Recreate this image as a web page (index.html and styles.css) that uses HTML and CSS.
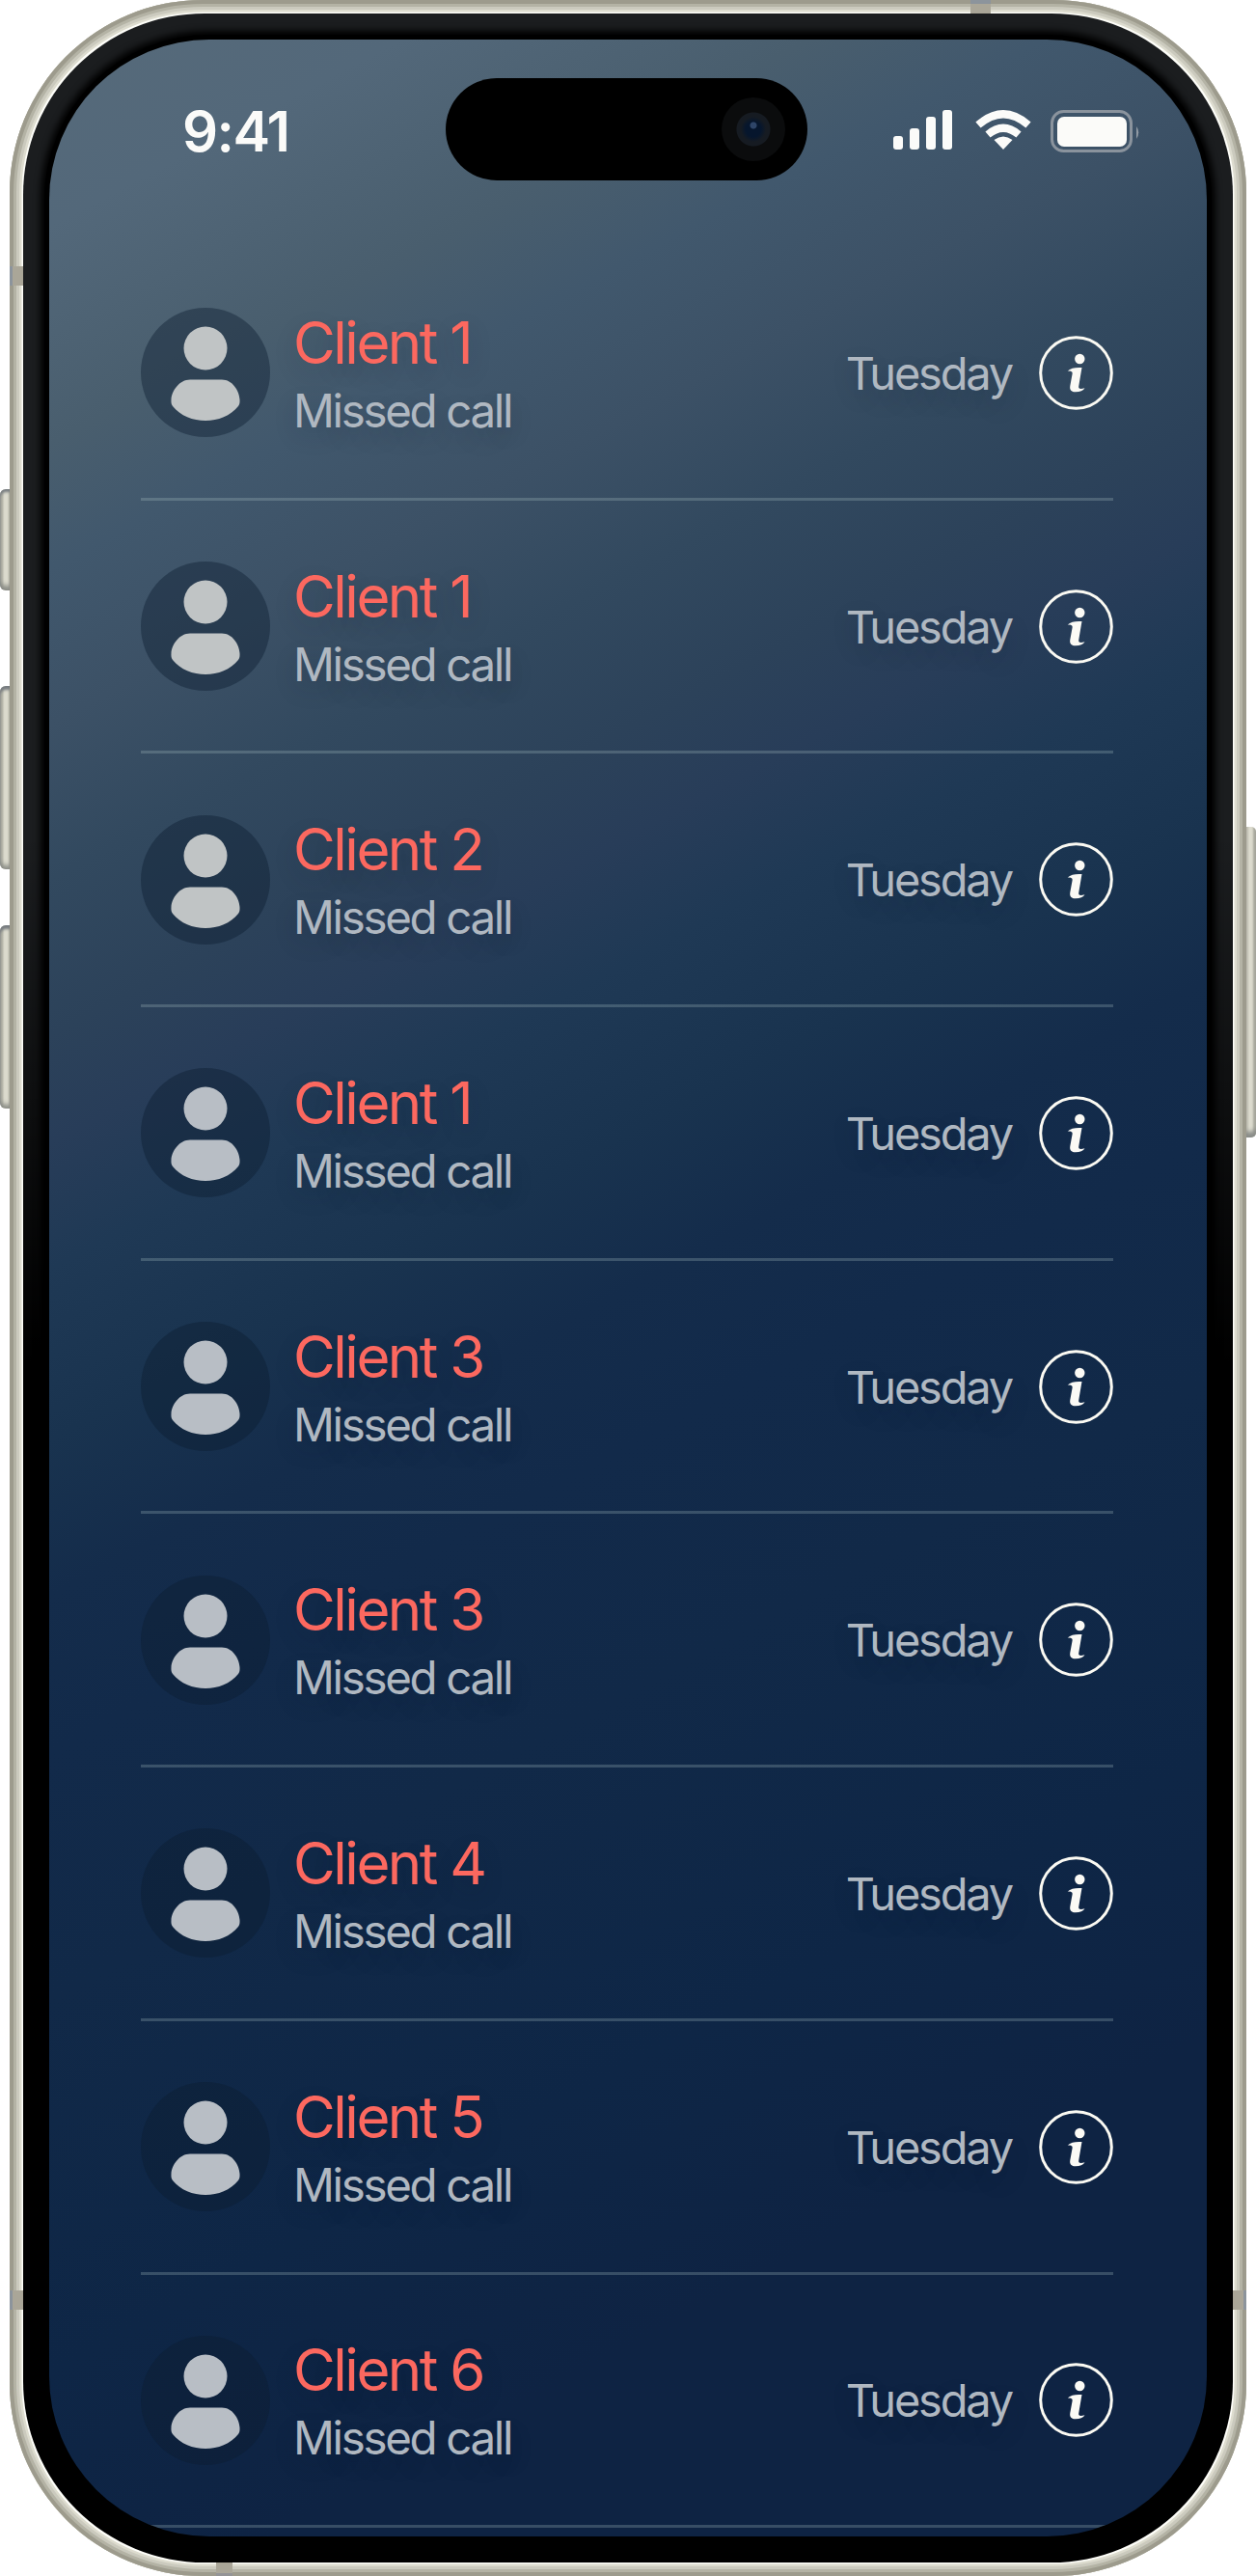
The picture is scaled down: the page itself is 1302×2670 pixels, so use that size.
FILE: index.html
```html
<!DOCTYPE html>
<html lang="en">
<head>
<meta charset="utf-8">
<title>Recent calls</title>
<link rel="stylesheet" href="styles.css">
</head>
<body>
<svg class="defs" aria-hidden="true">
  <symbol id="person" viewBox="0 0 134 134">
    <circle cx="67" cy="42" r="22.5"/>
    <path d="M51 74.500H84C95 74.500 102 86 102.500 95C102.700 98 102.500 100 101 102C93 112 80 117 67 117C54 117 41 112 33 102C31.500 100 31.300 98 31.500 95C32 86 40 74.500 51 74.500Z"/>
  </symbol>
  <symbol id="info" viewBox="0 0 77 77">
    <circle cx="38.500" cy="38.500" r="36.800" fill="none" stroke="#fbfaf3" stroke-width="3"/>
    <circle cx="42.300" cy="24" r="5.200"/>
    <path d="M29.700 36.500C33 33.500 38 32.500 44.500 33L41.200 52.500C40.800 54.800 42.500 55.800 47.500 54.200C46 57 42.500 58.300 38 58.300C33.500 58.300 31.600 56 32.300 52L34.600 39.500C35 37.200 33.500 36.500 29.700 36.500Z"/>
  </symbol>
</svg>
<div class="phone">
  <i class="side action"></i><i class="side vol-up"></i><i class="side vol-down"></i><i class="side power"></i>
  <div class="frame">
    <i class="band band-left-top"></i><i class="band band-left-bottom"></i><i class="band band-right"></i><i class="band band-top"></i><i class="band band-bottom"></i>
    <div class="bezel">
      <main class="screen">
        <header class="status">
          <span class="time">9:41</span>
          <svg class="indicators" width="260" height="46" viewBox="0 0 260 46">
            <g fill="#fbfbf9">
              <rect x="5" y="28" width="10" height="14" rx="3"/>
              <rect x="22" y="20" width="10" height="22" rx="3"/>
              <rect x="39" y="8" width="10" height="34" rx="3"/>
              <rect x="56" y="1" width="10" height="41" rx="3"/>
              <path d="M119 42L109.500 32Q119 25 128.500 32Z"/>
            </g>
            <g fill="none" stroke="#fbfbf9" stroke-width="8">
              <path d="M93 16.500Q119 -6 145 16.500"/>
              <path d="M103 26.500Q119 13 135 26.500"/>
            </g>
            <rect x="169.500" y="2.500" width="82" height="41" rx="12" fill="none" stroke="#8a939d" stroke-width="3"/>
            <rect x="175" y="8" width="72" height="31" rx="7" fill="#fbfbf9"/>
            <path d="M257 18Q261.500 24 257 31Z" fill="#919aa4"/>
          </svg>
        </header>
        <ul class="calls">
          <li class="call"><svg class="avatar"><use href="#person"/></svg><div class="who"><b>Client 1</b><span>Missed call</span></div><time>Tuesday</time><svg class="info"><use href="#info"/></svg></li>
          <li class="call"><svg class="avatar"><use href="#person"/></svg><div class="who"><b>Client 1</b><span>Missed call</span></div><time>Tuesday</time><svg class="info"><use href="#info"/></svg></li>
          <li class="call"><svg class="avatar"><use href="#person"/></svg><div class="who"><b>Client 2</b><span>Missed call</span></div><time>Tuesday</time><svg class="info"><use href="#info"/></svg></li>
          <li class="call"><svg class="avatar"><use href="#person"/></svg><div class="who"><b>Client 1</b><span>Missed call</span></div><time>Tuesday</time><svg class="info"><use href="#info"/></svg></li>
          <li class="call"><svg class="avatar"><use href="#person"/></svg><div class="who"><b>Client 3</b><span>Missed call</span></div><time>Tuesday</time><svg class="info"><use href="#info"/></svg></li>
          <li class="call"><svg class="avatar"><use href="#person"/></svg><div class="who"><b>Client 3</b><span>Missed call</span></div><time>Tuesday</time><svg class="info"><use href="#info"/></svg></li>
          <li class="call"><svg class="avatar"><use href="#person"/></svg><div class="who"><b>Client 4</b><span>Missed call</span></div><time>Tuesday</time><svg class="info"><use href="#info"/></svg></li>
          <li class="call"><svg class="avatar"><use href="#person"/></svg><div class="who"><b>Client 5</b><span>Missed call</span></div><time>Tuesday</time><svg class="info"><use href="#info"/></svg></li>
          <li class="call"><svg class="avatar"><use href="#person"/></svg><div class="who"><b>Client 6</b><span>Missed call</span></div><time>Tuesday</time><svg class="info"><use href="#info"/></svg></li>
        </ul>
        <div class="island"><i class="camera"></i></div>
      </main>
    </div>
  </div>
</div>
</body>
</html>
```
FILE: styles.css
```css
* { box-sizing: border-box; }
body { margin: 0; background: #fff; font-family: Inter, "Liberation Sans", sans-serif; }
.defs { position: absolute; width: 0; height: 0; }

/* Device body */
.phone { position: relative; width: 1302px; height: 2670px; padding: 0 10px; overflow: hidden; }
.frame {
  position: relative; height: 2670px; padding: 14px; border-radius: 200px; background: #fdfdf8;
  box-shadow: inset 0 0 0 4px #9d9b8d, inset 0 0 0 7px #b4b3a5, inset 0 0 0 10px #cbcabe, inset 0 0 0 12.5px #dddccf;
}
.bezel {
  height: 2642px; padding: 27px; border-radius: 188px;
  background: linear-gradient(transparent 850px, #000 1400px), #1b1d1f;
  position: relative;
}
.bezel::before {
  content: ""; position: absolute; inset: 22px; border-radius: 171px; background: #000;
  box-shadow: 0 0 7px 4px #000;
}
.screen {
  position: relative; height: 2588px; border-radius: 166px; overflow: hidden;
  background: linear-gradient(152deg, #566a7a 0%, #53687a 6%, #495e6e 13%, #41586d 17%, #3c5166 22%, #32495f 27%, #2c425a 32%, #283d59 35.500%, #1f3955 39.500%, #19334f 45%, #142c4b 50%, #122a4a 55%, #112948 63%, #0e2646 75%, #0e2343 84%, #0e2343 100%);
}

.side { position: absolute; width: 12px; background: linear-gradient(90deg, #c1c0b2 0 3px, #dcdbce 4px 8px, #bab9ab 10px); }
.action { left: 0; top: 507px; height: 105px; border-radius: 6px 0 0 6px; box-shadow: inset 0 3px 3px #777c80, inset 0 -5px 5px #8b8d86; }
.vol-up { left: 0; top: 711px; height: 190px; border-radius: 6px 0 0 6px; box-shadow: inset 0 4px 3px #777c80, inset 0 -4px 5px #8b8d86; }
.vol-down { left: 0; top: 959px; height: 190px; border-radius: 6px 0 0 6px; box-shadow: inset 0 4px 3px #777c80, inset 0 -4px 5px #8b8d86; }
.power { right: 0; top: 857px; height: 322px; border-radius: 0 5px 5px 0; background: linear-gradient(90deg, #c5c4b7 3px, #dddccf 5px 8px, #b9b8aa 10px); box-shadow: inset 0 -6px 5px #898c88; }

.band { position: absolute; background: #aaa698; }
.band-left-top, .band-left-bottom { left: 0; width: 14px; height: 20px; border-left: 3px solid #8c949c; }
.band-left-top { top: 276px; }
.band-left-bottom { top: 2374px; }
.band-right { right: 0; top: 2374px; width: 14px; height: 20px; border-right: 3px solid #8c949c; }
.band-top { left: 996px; top: 0; width: 21px; height: 14px; border-top: 4px solid #8c949c; }
.band-bottom { left: 214px; bottom: 0; width: 17px; height: 14px; border-bottom: 3px solid #949496; }

/* Status bar */
.status { display: flex; justify-content: space-between; align-items: center; height: 215px; padding: 0 70px 25px 138px; }
.time { font-size: 58px; font-weight: 600; letter-spacing: -1.600px; color: #fbfbf9; }
.indicators { display: block; }
.island {
  position: absolute; left: 411px; top: 40px; width: 375px; height: 106px; border-radius: 53px; background: #000;
  display: flex; align-items: center; justify-content: flex-end; padding-right: 23px;
}
.camera {
  width: 66px; height: 66px; border-radius: 50%;
  background: radial-gradient(circle at 33px 29px, #2e4568 0 3px, transparent 4px), radial-gradient(circle, #06162d 0 8px, #161b22 13px 17px, #0b0c0d 18px);
}

/* Call list */
.calls { list-style: none; margin: 0; padding: 0 97px 0 95px; }
.call {
  display: flex; align-items: center; height: 262.7px; padding-top: 1px;
  border-bottom: 3.500px solid rgba(180, 205, 205, .25);
}
.avatar { flex: none; width: 134px; height: 134px; border-radius: 50%; fill: #b8bec5; background: rgba(11, 28, 48, .42); }
.call:nth-child(-n+3) .avatar { fill: #c0c4c5; }
.who { flex: 1; margin: 8px 0 0 24px; display: flex; flex-direction: column; text-shadow: 0 10px 24px rgba(10, 28, 50, .2); }
.who b { font-size: 60px; line-height: 71px; font-weight: 400; letter-spacing: -2.500px; color: #fc685f; }
.who span { font-size: 47.500px; line-height: 70px; letter-spacing: -2.350px; color: #b0b8c1; }
time { font-size: 47px; letter-spacing: -2.200px; color: #b0b8c1; text-shadow: 0 10px 24px rgba(10, 28, 50, .2); }
.info { flex: none; width: 77px; height: 77px; margin-left: 28px; fill: #fbfaf5; }
```
